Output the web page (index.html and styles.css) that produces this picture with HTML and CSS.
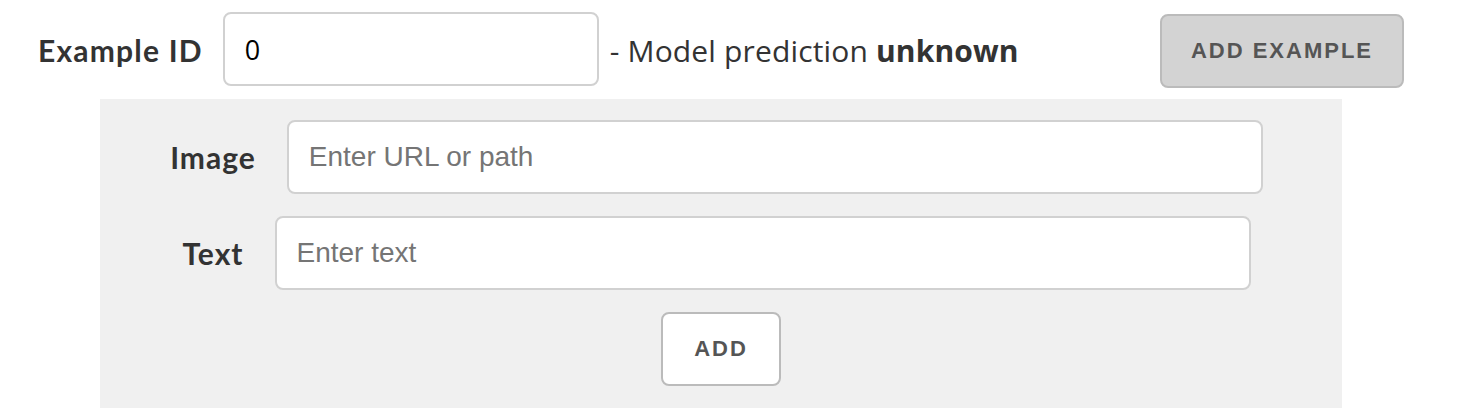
FILE: index.html
```html
<!DOCTYPE html>
<html>
<head>
<meta charset="utf-8">
<link rel="stylesheet" href="styles.css">
</head>
<body>
<div class="top">
  <label class="id-label">Example ID</label>
  <input class="field id-input" type="text" value="0">
  <span class="pred">- Model prediction <b>unknown</b></span>
  <button class="btn btn-gray">Add Example</button>
</div>
<div class="panel">
  <div class="row">
    <label class="lbl">Image</label>
    <input class="field wide" type="text" placeholder="Enter URL or path">
  </div>
  <div class="row">
    <label class="lbl">Text</label>
    <input class="field wide" type="text" placeholder="Enter text">
  </div>
  <div class="row-btn">
    <button class="btn btn-white">Add</button>
  </div>
</div>
</body>
</html>
```
FILE: styles.css
```css
html, body {
  margin: 0;
  padding: 0;
  background: #fff;
}
body {
  font-family: "Open Sans", sans-serif;
  color: #333;
}
.top {
  display: flex;
  align-items: center;
  padding: 12px 0 0 38px;
  height: 76px;
}
.id-label {
  font-family: Lato, sans-serif;
  font-weight: 700;
  font-size: 30px;
  letter-spacing: 1.2px;
  margin-right: 20px;
}
.field {
  box-sizing: border-box;
  height: 74px;
  border: 2px solid #d1d1d1;
  border-radius: 8px;
  background: #fff;
  padding: 0 20px;
  font-family: "Liberation Sans", Arial, sans-serif;
  font-size: 28px;
  color: #000;
  outline: none;
}
.field::placeholder {
  color: #757575;
}
.id-input {
  width: 376px;
  font-family: "Open Sans", sans-serif;
  font-size: 27px;
  align-self: flex-start;
}
.pred {
  font-size: 30px;
  margin-left: 11px;
  letter-spacing: 0.15px;
}
.pred b {
  font-weight: 700;
}
.btn {
  box-sizing: border-box;
  height: 74px;
  padding: 0 29px;
  border: 2px solid #bbb;
  border-radius: 8px;
  font-family: "Liberation Sans", Arial, sans-serif;
  font-weight: 700;
  font-size: 22px;
  letter-spacing: 2px;
  text-transform: uppercase;
  color: #555;
  cursor: pointer;
}
.btn-gray {
  background: #d3d3d3;
  margin-left: auto;
  margin-right: 60px;
  align-self: flex-start;
  margin-top: 2px;
}
.btn-white {
  background: #fff;
  padding: 0 31px;
}
.panel {
  margin: 11px 0 0 100px;
  width: 1242px;
  background: #f0f0f0;
  box-sizing: border-box;
  padding: 21px 9px 22px 0;
  display: flex;
  flex-direction: column;
  gap: 22px;
}
.row {
  display: flex;
  align-items: center;
  justify-content: center;
  gap: 31px;
}
.lbl {
  font-family: Lato, sans-serif;
  font-weight: 700;
  font-size: 30px;
  letter-spacing: 1px;
}
.wide {
  width: 976px;
}
.row-btn {
  display: flex;
  justify-content: center;
  padding-left: 9px;
}
```
